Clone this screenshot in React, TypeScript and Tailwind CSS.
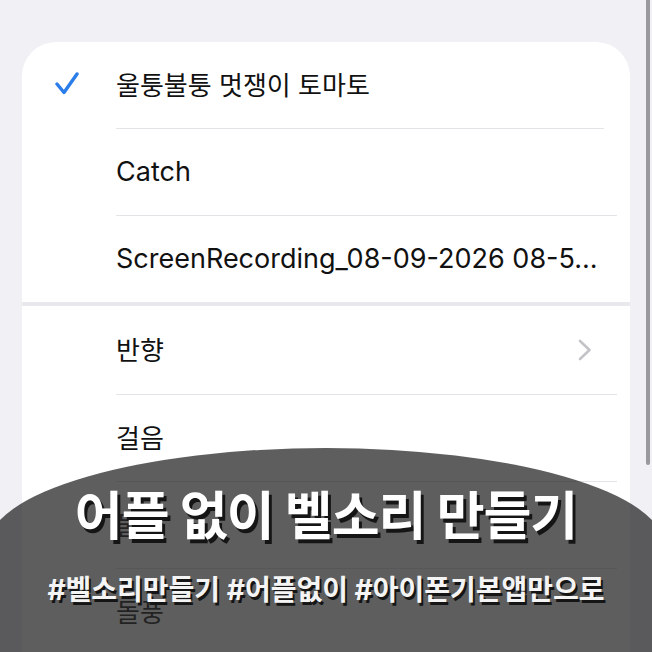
import React from "react";

const KR = { fontFamily: '"Inter", "Noto Sans CJK KR", sans-serif' };

function Row({
  children,
  check,
  chevron,
  sep,
  sepRight,
  h = 86,
  ko = true,
}: {
  children: React.ReactNode;
  check?: boolean;
  chevron?: boolean;
  sep?: "thin" | "thick" | "none";
  sepRight?: number;
  h?: number;
  ko?: boolean;
}) {
  return (
    <div className="flex flex-col">
      <div className="flex items-center" style={{ height: h }}>
        <div className="w-[94px] flex items-center pl-[32px]">
          {check && (
            <svg width="26" height="26" viewBox="0 0 26 26" fill="none">
              <polyline
                points="3,12 10,20.5 23,2"
                stroke="#2b7de9"
                strokeWidth="3.4"
                strokeLinecap="round"
                strokeLinejoin="round"
              />
            </svg>
          )}
        </div>
        <div
          className={
            "flex-1 text-[#111] whitespace-nowrap " +
            (ko ? "text-[26px] tracking-[0px]" : "text-[27px] tracking-[0px]")
          }
        >
          {children}
        </div>
        {chevron && (
          <div className="pr-[38px]">
            <svg width="14" height="22" viewBox="0 0 14 22" fill="none">
              <polyline
                points="2,2 11.5,11 2,20"
                stroke="#c4c4c8"
                strokeWidth="2.6"
                strokeLinecap="round"
                strokeLinejoin="round"
              />
            </svg>
          </div>
        )}
      </div>
      {sep === "thin" && (
        <div className="flex">
          <div className="w-[94px]" />
          <div
            className="h-px bg-[#e4e4e8]"
            style={{ width: sepRight ?? 501 }}
          />
        </div>
      )}
      {sep === "thick" && <div className="h-[4px] bg-[#e8e8ed]" />}
    </div>
  );
}

export default function App() {
  return (
    <div
      className="relative w-[652px] h-[652px] overflow-hidden bg-[#f0f0f5]"
      style={KR}
    >
      <div className="pt-[42px] pl-[22px]">
        <div className="w-[608px] h-[640px] bg-white rounded-t-[34px] overflow-hidden">
          <Row check sep="thin" sepRight={488}>
            울퉁불퉁 멋쟁이 토마토
          </Row>
          <Row sep="thin" ko={false}>
            Catch
          </Row>
          <Row sep="thick" ko={false}>
            ScreenRecording_08-09-2026 08-5...
          </Row>
          <Row chevron sep="thin" h={88}>
            반향
          </Row>
          <Row sep="thin">걸음</Row>
          <Row sep="thin">물가</Row>
          <Row sep="none">돌풍</Row>
        </div>
      </div>

      {/* scrollbar */}
      <div className="absolute right-[2px] top-0 w-[4px] h-[465px] rounded-b-full bg-[#9a9a9e]" />

      {/* overlay */}
      <div className="absolute left-[-12px] top-[448px] w-[676px] h-[220px] bg-[rgba(40,40,40,0.75)] rounded-tl-[338px_98px] rounded-tr-[338px_98px]" />

      <div className="absolute left-0 right-0 top-[448px] flex flex-col items-center">
        <div className="mt-[43px] text-[52px] font-bold text-white leading-none tracking-[-1px] whitespace-nowrap [text-shadow:3px_4px_0_#151515]">
          어플 없이 벨소리 만들기
        </div>
        <div className="mt-[33px] text-[28px] font-bold text-[#f4f4f4] leading-none tracking-[0px] whitespace-nowrap [text-shadow:2px_3px_0_#151515]">
          #벨소리만들기 #어플없이 #아이폰기본앱만으로
        </div>
      </div>
    </div>
  );
}
